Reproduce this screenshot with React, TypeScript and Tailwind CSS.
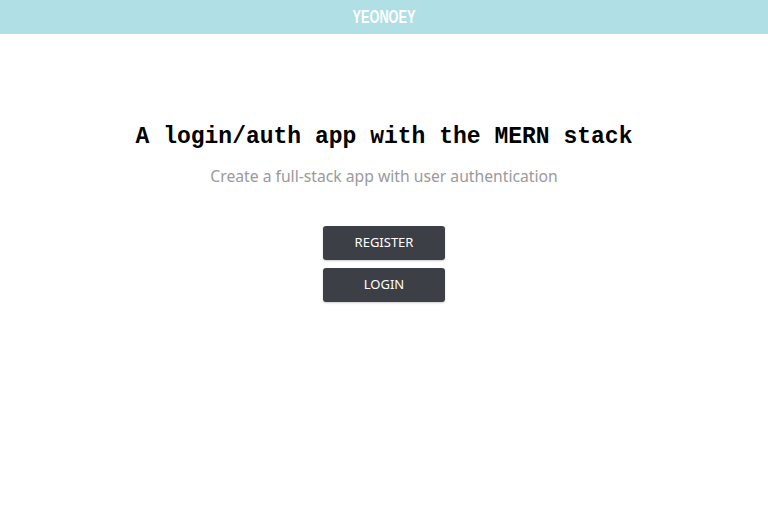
import React from "react";

export default function App() {
  return (
    <div className="min-h-[517px] w-full bg-white">
      <header className="flex h-[34px] items-center justify-center bg-[#b0dfe5]">
        <span
          className="inline-block scale-x-[0.67] text-[19px] font-bold text-white"
          style={{ fontFamily: '"Liberation Sans", sans-serif' }}
        >
          YEONOEY
        </span>
      </header>
      <main className="flex flex-col items-center pt-[86px]">
        <h1
          className="text-[23px] leading-[34px] font-bold text-black"
          style={{ fontFamily: '"Liberation Mono", monospace' }}
        >
          A login/auth app with the MERN stack
        </h1>
        <p
          className="mt-[10px] text-[15.7px] leading-[24px] text-[#9a9a9a]"
          style={{ fontFamily: '"Noto Sans", sans-serif' }}
        >
          Create a full-stack app with user authentication
        </p>
        <div
          className="mt-[38px] flex flex-col gap-[8px]"
          style={{ fontFamily: '"Noto Sans", sans-serif' }}
        >
          <button className="h-[34px] w-[122px] rounded-[3px] bg-[#3d3f46] text-[13px] text-white shadow-[0_1px_2px_rgba(0,0,0,0.2)]">
            REGISTER
          </button>
          <button className="h-[34px] w-[122px] rounded-[3px] bg-[#3d3f46] text-[13px] text-white shadow-[0_1px_2px_rgba(0,0,0,0.2)]">
            LOGIN
          </button>
        </div>
      </main>
    </div>
  );
}
